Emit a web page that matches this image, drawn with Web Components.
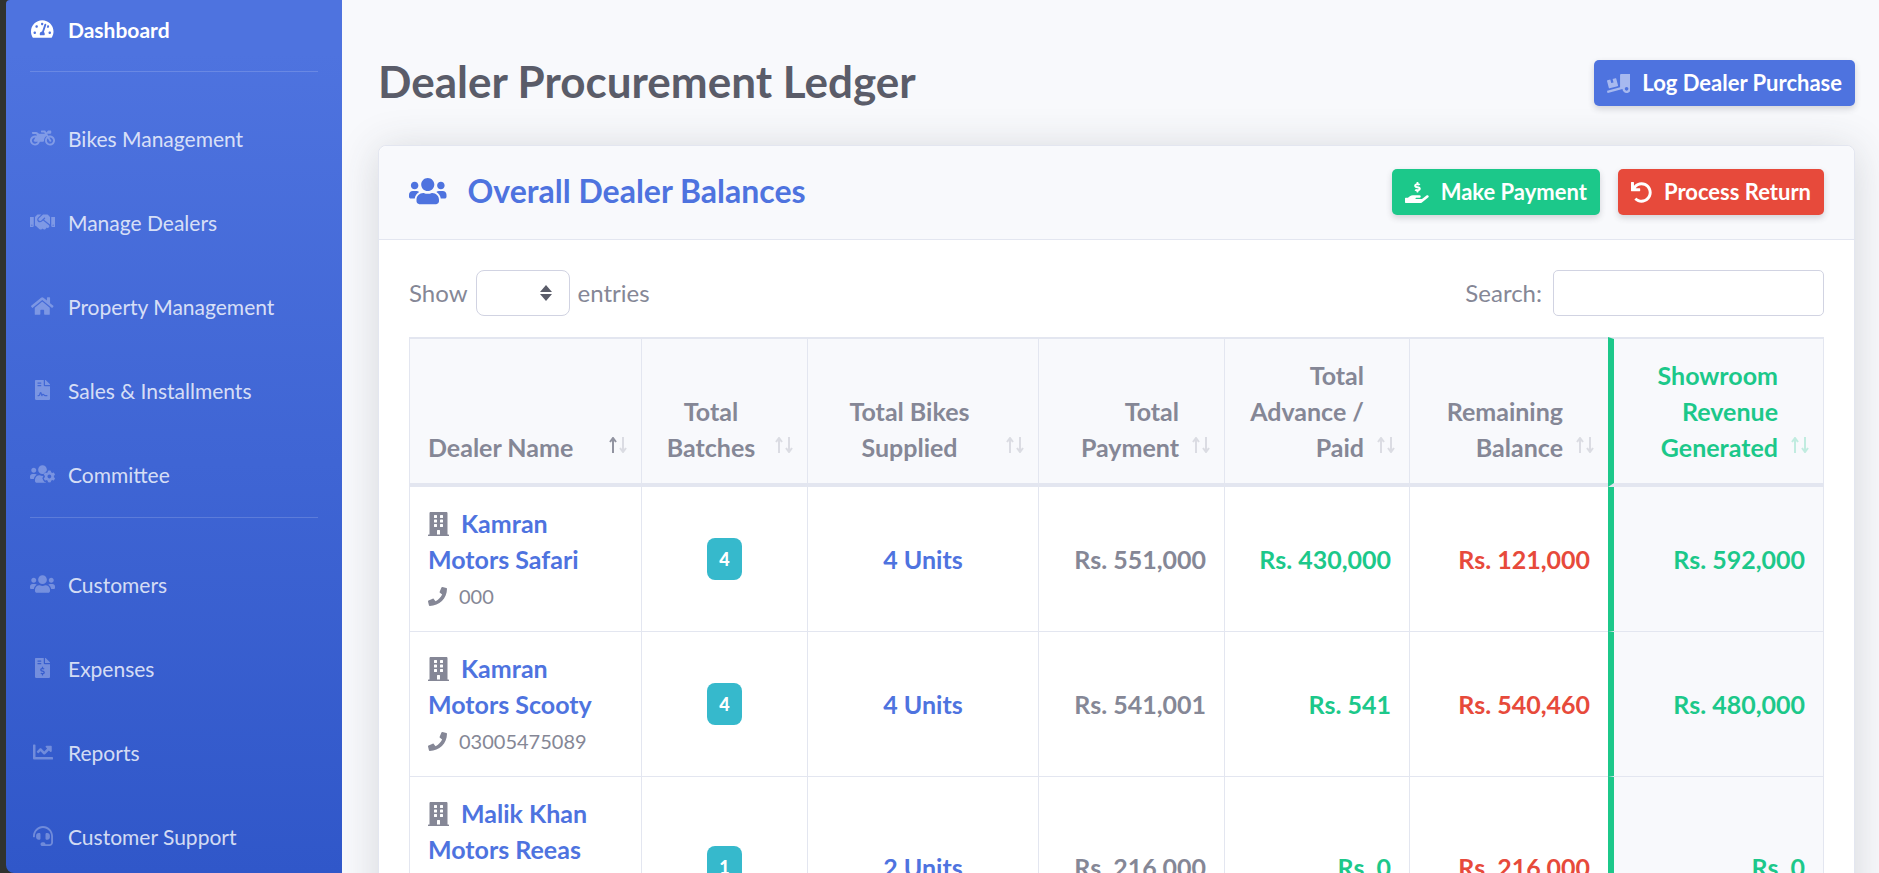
<!DOCTYPE html>
<html lang="en">
<head>
<meta charset="utf-8">
<title>Dealer Procurement Ledger</title>
<style>
  html, body { margin: 0; height: 100%; }
  body { font-family: Lato, "Open Sans", sans-serif; color: #858796; background: #f8f9fc; overflow: hidden; }
</style>
</head>
<body>
<app-shell>
  <side-nav slot="nav">
    <nav-group>
      <nav-item icon="gauge" active>Dashboard</nav-item>
    </nav-group>
    <nav-group>
      <nav-item icon="motorcycle">Bikes Management</nav-item>
      <nav-item icon="handshake">Manage Dealers</nav-item>
      <nav-item icon="home">Property Management</nav-item>
      <nav-item icon="contract">Sales &amp; Installments</nav-item>
      <nav-item icon="usersCog">Committee</nav-item>
    </nav-group>
    <nav-group>
      <nav-item icon="users">Customers</nav-item>
      <nav-item icon="invoice">Expenses</nav-item>
      <nav-item icon="chart">Reports</nav-item>
      <nav-item icon="headset">Customer Support</nav-item>
    </nav-group>
  </side-nav>
  <page-heading>
    Dealer Procurement Ledger
    <action-button slot="action" tone="primary" icon="truck">Log Dealer Purchase</action-button>
  </page-heading>
  <panel-card icon="users">
    <span slot="title">Overall Dealer Balances</span>
    <action-button slot="actions" tone="success" icon="payment">Make Payment</action-button>
    <action-button slot="actions" tone="danger" icon="undo">Process Return</action-button>
    <table-tools></table-tools>
    <dealer-table></dealer-table>
  </panel-card>
</app-shell>

<script>
const PAGE = 'M377 105L279.1 7c-4.5-4.5-10.6-7-17-7H256v128h128v-6.1c0-6.3-2.5-12.4-7-16.9zm-153 31V0H24C10.7 0 0 10.7 0 24v464c0 13.3 10.7 24 24 24h336c13.3 0 24-10.7 24-24V160H248c-13.2 0-24-10.8-24-24zM64 72c0-4.42 3.58-8 8-8h80c4.42 0 8 3.58 8 8v16c0 4.42-3.58 8-8 8H72c-4.42 0-8-3.58-8-8V72zm0 80v-16c0-4.42 3.58-8 8-8h80c4.42 0 8 3.58 8 8v16c0 4.42-3.58 8-8 8H72c-4.42 0-8-3.58-8-8z';
const win = (x, y) => `M${x} ${y + 12}c0-6.6 5.4-12 12-12h40c6.6 0 12 5.4 12 12v40c0 6.6-5.4 12-12 12h-40c-6.6 0-12-5.4-12-12z`;
/* name: [viewBox width, path]; every icon is 512 units high */
const ICONS = {
  gauge: [576, 'M288 32C128.94 32 0 160.94 0 320c0 52.8 14.25 102.26 39.06 144.8 5.61 9.62 16.3 15.2 27.44 15.2h443c11.14 0 21.83-5.58 27.44-15.2C561.75 422.26 576 372.8 576 320c0-159.06-128.94-288-288-288zm0 64c14.71 0 26.58 10.13 30.32 23.65-1.11 2.26-2.64 4.23-3.45 6.67l-9.22 27.67c-5.13 3.49-10.97 6.01-17.64 6.01-17.67 0-32-14.33-32-32S270.33 96 288 96zM96 384c-17.67 0-32-14.33-32-32s14.33-32 32-32 32 14.33 32 32-14.33 32-32 32zm48-160c-17.67 0-32-14.33-32-32s14.33-32 32-32 32 14.33 32 32-14.33 32-32 32zm246.77-72.41l-61.33 184C343.13 347.33 352 364.54 352 384c0 11.72-3.38 22.55-8.88 32H232.88c-5.5-9.45-8.88-20.28-8.88-32 0-33.94 26.5-61.43 59.9-63.59l61.34-184.01c4.17-12.56 17.73-19.45 30.36-15.17 12.57 4.19 19.35 17.79 15.17 30.36zm14.66 57.2l15.52-46.55c3.47-1.29 7.13-2.23 11.05-2.23 17.67 0 32 14.33 32 32s-14.33 32-32 32c-11.38-.01-20.89-6.28-26.57-15.22zM480 384c-17.67 0-32-14.33-32-32s14.33-32 32-32 32 14.33 32 32-14.33 32-32 32z'],
  motorcycle: [640, 'M512.9 192c-14.9-.1-29.1 2.3-42.4 6.9L437.6 144H520c13.3 0 24-10.7 24-24V88c0-13.3-10.7-24-24-24h-45.3c-6.8 0-13.3 2.9-17.8 7.9l-37.5 41.7-22.8-38C392.2 68.4 384.4 64 376 64h-80c-8.8 0-16 7.2-16 16v16c0 8.8 7.2 16 16 16h66.4l19.2 32H227.9c-17.7-23.1-44.9-40-99.9-40H72.5C59 104 47.7 115 48 128.5c.2 13 10.9 23.5 24 23.5h56c24.5 0 38.7 10.9 47.8 24.8l-11.3 20.5c-13-3.9-26.9-5.7-41.3-5.2C55.9 194.5 1.6 249.6 0 317c-1.6 72.1 56.3 131 128 131 59.6 0 109.7-40.8 124-96h84.2c13.7 0 24.6-11.4 24-25.1-2.1-47.1 17.5-93.7 56.2-125l12.5 20.8c-27.6 23.7-45.1 58.9-44.8 98.2.5 69.6 57.2 126.5 126.8 127.1 71.6.7 129.8-57.5 129.2-129.1-.7-69.6-57.6-126.4-127.2-126.9zM128 400c-44.1 0-80-35.9-80-80s35.9-80 80-80c4.2 0 8.4.3 12.5 1L99 316.4c-8.8 16 2.8 35.6 21 35.6h81.3c-12.4 28.2-40.6 48-73.3 48zm463.9-75.6c-2.2 40.6-35 73.4-75.5 75.5-46.1 2.5-84.4-34.3-84.4-79.9 0-21.4 8.4-40.8 22.1-55.1l49.4 82.4c4.5 7.6 14.4 10 22 5.5l13.7-8.2c7.6-4.5 10-14.4 5.5-22l-48.6-80.9c5.2-1.1 10.5-1.6 15.9-1.6 45.6-.1 82.3 38.2 79.9 84.3z'],
  handshake: [640, 'M434.7 64h-85.9c-8 0-15.7 3-21.6 8.4l-98.3 90c-.1.1-.2.3-.3.4-16.6 15.6-16.3 40.5-2.1 56 12.7 13.9 39.4 17.6 56.1 2.7.1-.1.3-.1.4-.2l79.9-73.2c6.5-5.9 16.7-5.5 22.6 1 6 6.5 5.5 16.6-1 22.6l-26.1 23.9L504 313.8c2.9 2.4 5.5 5 7.9 7.7V128l-54.6-54.6c-5.9-6-14.1-9.4-22.6-9.4zM544 128.2v223.9c0 17.7 14.3 32 32 32h64V128.2h-96zm48 223.9c-8.8 0-16-7.2-16-16s7.2-16 16-16 16 7.2 16 16-7.2 16-16 16zM0 384h64c17.7 0 32-14.3 32-32V128.2H0V384zm48-63.9c8.8 0 16 7.2 16 16s-7.2 16-16 16-16-7.2-16-16c0-8.9 7.2-16 16-16zm435.9 18.6L334.6 217.5l-30 27.5c-29.7 27.1-75.2 24.5-101.7-4.4-26.9-29.4-24.8-74.9 4.4-101.7L289.1 64h-83.8c-8.5 0-16.6 3.4-22.6 9.4L128 128v223.9h18.3l90.5 81.9c27.4 22.3 67.7 18.1 90-9.3l.2-.2 17.9 15.5c15.9 13 39.4 10.5 52.3-5.4l31.4-38.6 5.4 4.4c13.7 11.1 33.9 9.1 45-4.7l9.5-11.7c11.2-13.8 9.1-33.9-4.6-45.1z'],
  home: [576, 'M280.37 148.26L96 300.11V464a16 16 0 0 0 16 16l112.06-.29a16 16 0 0 0 15.92-16V368a16 16 0 0 1 16-16h64a16 16 0 0 1 16 16v95.64a16 16 0 0 0 16 16.05L464 480a16 16 0 0 0 16-16V300L295.67 148.26a12.19 12.19 0 0 0-15.3 0zM571.6 251.47L488 182.56V44.05a12 12 0 0 0-12-12h-56a12 12 0 0 0-12 12v72.61L318.47 43a48 48 0 0 0-61 0L4.34 251.47a12 12 0 0 0-1.6 16.9l25.5 31A12 12 0 0 0 45.15 301l235.22-193.74a12.19 12.19 0 0 1 15.3 0L530.9 301a12 12 0 0 0 16.9-1.6l25.5-31a12 12 0 0 0-1.7-16.93z'],
  contract: [384, PAGE + 'M256.81 384H304c8.84 0 16 7.16 16 16s-7.16 16-16 16h-47.19c-16.45 0-31.27-9.14-38.64-23.86-2.95-5.92-8.09-6.52-10.17-6.52s-7.22.59-10.02 6.19l-7.67 15.34a15.986 15.986 0 0 1-14.31 8.84c-.38 0-.75-.02-1.14-.05-6.45-.45-12-4.75-14.03-10.89L144 354.59l-10.61 31.88c-5.89 17.66-22.38 29.53-41 29.53H80c-8.84 0-16-7.16-16-16s7.16-16 16-16h12.39c4.83 0 9.11-3.08 10.64-7.66l18.19-54.64c3.3-9.81 12.44-16.41 22.78-16.41s19.48 6.59 22.77 16.41l13.88 41.64c19.77-16.19 54.05-9.7 66 14.16 2.02 4.06 5.96 6.5 10.16 6.5z'],
  invoice: [384, PAGE + 'M208 415.88V440c0 4.42-3.58 8-8 8h-16c-4.42 0-8-3.58-8-8v-24.29c-11.29-.58-22.27-4.52-31.37-11.35-3.9-2.93-4.1-8.77-.57-12.14l11.75-11.21c2.77-2.64 6.89-2.76 10.13-.73 3.87 2.42 8.26 3.72 12.82 3.72h28.11c6.5 0 11.8-5.92 11.8-13.19 0-5.95-3.61-11.19-8.77-12.73l-45-13.5c-18.59-5.58-31.58-23.42-31.58-43.39 0-24.52 19.05-44.44 42.67-45.07V232c0-4.42 3.58-8 8-8h16c4.42 0 8 3.58 8 8v24.29c11.29.58 22.27 4.51 31.37 11.35 3.9 2.93 4.1 8.77.57 12.14l-11.75 11.21c-2.77 2.64-6.89 2.76-10.13.73-3.87-2.43-8.26-3.72-12.82-3.72h-28.11c-6.5 0-11.8 5.92-11.8 13.19 0 5.95 3.61 11.19 8.77 12.73l45 13.5c18.59 5.58 31.58 23.42 31.58 43.39 0 24.53-19.05 44.44-42.67 45.07z'],
  users: [640, 'M96 224c35.3 0 64-28.7 64-64s-28.7-64-64-64-64 28.7-64 64 28.7 64 64 64zm448 0c35.3 0 64-28.7 64-64s-28.7-64-64-64-64 28.7-64 64 28.7 64 64 64zm32 32h-64c-17.6 0-33.5 7.1-45.1 18.6 40.3 22.1 68.9 62 75.1 109.4h66c17.7 0 32-14.3 32-32v-32c0-35.3-28.7-64-64-64zm-256 0c61.9 0 112-50.1 112-112S381.9 32 320 32 208 82.1 208 144s50.1 112 112 112zm76.8 32h-8.3c-20.8 10-43.9 16-68.5 16s-47.6-6-68.5-16h-8.3C179.6 288 128 339.6 128 403.2V432c0 26.5 21.5 48 48 48h288c26.5 0 48-21.5 48-48v-28.8c0-63.6-51.6-115.2-115.2-115.2zm-223.7-13.4C161.5 263.1 145.6 256 128 256H64c-35.3 0-64 28.7-64 64v32c0 17.7 14.3 32 32 32h65.9c6.3-47.4 34.9-87.3 75.2-109.4z'],
  usersCog: [640, 'M610.5 341.3c2.6-14.1 2.6-28.5 0-42.6l25.8-14.9c3-1.7 4.3-5.2 3.3-8.5-6.7-21.6-18.2-41.2-33.2-57.4-2.3-2.5-6-3.1-9-1.4l-25.8 14.9c-10.9-9.3-23.4-16.5-36.9-21.3v-29.8c0-3.4-2.4-6.4-5.7-7.1-22.3-5-45-4.8-66.2 0-3.3.7-5.7 3.7-5.7 7.1v29.8c-13.5 4.8-26 12-36.9 21.3l-25.8-14.9c-2.9-1.7-6.7-1.1-9 1.4-15 16.2-26.5 35.8-33.2 57.4-1 3.3.4 6.8 3.3 8.5l25.8 14.9c-2.6 14.1-2.6 28.5 0 42.6l-25.8 14.9c-3 1.7-4.3 5.2-3.3 8.5 6.7 21.6 18.2 41.1 33.2 57.4 2.3 2.5 6 3.1 9 1.4l25.8-14.9c10.9 9.3 23.4 16.5 36.9 21.3v29.8c0 3.4 2.4 6.4 5.7 7.1 22.3 5 45 4.8 66.2 0 3.3-.7 5.7-3.7 5.7-7.1v-29.8c13.5-4.8 26-12 36.9-21.3l25.8 14.9c2.9 1.7 6.7 1.1 9-1.4 15-16.2 26.5-35.8 33.2-57.4 1-3.3-.4-6.8-3.3-8.5zM496 368.5c-26.8 0-48.5-21.8-48.5-48.5s21.8-48.5 48.5-48.5 48.5 21.8 48.5 48.5-21.7 48.5-48.5 48.5zM96 224c35.3 0 64-28.7 64-64s-28.7-64-64-64-64 28.7-64 64 28.7 64 64 64zM320 256c12 0 24-2 35-6 14-24 32-47 58-57 12-15 19-31 19-49 0-61.9-50.1-112-112-112S208 82.1 208 144s50.1 112 112 112zM243.2 288h8.3c20.9 10 44 16 68.5 16 6 0 12 0 17-1v28c-17 12-22 27-17 43 8 30 24 56 46 78 12 12 28 16 42 14v14H176c-26.5 0-48-21.5-48-48v-28.8C128 339.6 179.6 288 243.2 288zM173.1 274.6C161.5 263.1 145.6 256 128 256H64c-35.3 0-64 28.7-64 64v32c0 17.7 14.3 32 32 32h65.9c6.3-47.4 34.9-87.3 75.2-109.4z'],
  chart: [512, 'M496 384H64V80c0-8.84-7.16-16-16-16H16C7.16 64 0 71.16 0 80v336c0 17.67 14.33 32 32 32h464c8.84 0 16-7.16 16-16v-32c0-8.84-7.16-16-16-16zM464 96H345.94c-21.38 0-32.09 25.85-16.97 40.97l32.4 32.4L288 242.75l-73.37-73.37c-12.5-12.5-32.76-12.5-45.25 0l-68.69 68.69c-6.25 6.25-6.25 16.38 0 22.63l22.62 22.62c6.25 6.25 16.38 6.25 22.63 0L192 237.25l73.37 73.37c12.5 12.5 32.76 12.5 45.25 0l96-96 32.4 32.4c15.12 15.12 40.97 4.41 40.97-16.97V112c.01-8.84-7.15-16-15.99-16z'],
  headset: [512, 'M192 208c0-17.67-14.33-32-32-32h-16c-35.35 0-64 28.65-64 64v48c0 35.35 28.65 64 64 64h16c17.67 0 32-14.33 32-32V208zm176 144c35.35 0 64-28.65 64-64v-48c0-35.35-28.65-64-64-64h-16c-17.67 0-32 14.33-32 32v112c0 17.67 14.33 32 32 32h16zM256 0C113.18 0 4.58 118.83 0 256v16c0 8.84 7.16 16 16 16h16c8.84 0 16-7.16 16-16v-16c0-114.69 93.31-208 208-208s208 93.31 208 208h-.12c.08 2.43.12 165.72.12 165.72 0 23.35-18.93 42.28-42.28 42.28H320c0-26.51-21.49-48-48-48h-32c-26.51 0-48 21.49-48 48s21.49 48 48 48h181.72c49.86 0 90.28-40.42 90.28-90.28V256C507.4 118.83 398.82 0 256 0z'],
  building: [448, 'M436 480h-20V24c0-13.255-10.745-24-24-24H56C42.745 0 32 10.745 32 24v456H12c-6.627 0-12 5.373-12 12v20h448v-20c0-6.627-5.373-12-12-12z' + win(128, 64) + win(256, 64) + win(128, 160) + win(256, 160) + win(128, 256) + win(256, 256) + 'M192 396c0-6.6 5.4-12 12-12h40c6.6 0 12 5.4 12 12v84h-64z'],
  phone: [512, 'M493.4 24.6l-104-24c-11.3-2.6-22.9 3.3-27.5 13.9l-48 112c-4.2 9.8-1.4 21.3 6.9 28l60.6 49.6c-36 76.7-98.9 140.5-177.2 177.2l-49.6-60.6c-6.8-8.3-18.2-11.1-28-6.9l-112 48C3.9 366.5-2 378.1.6 389.4l24 104C27.1 504.2 36.7 512 48 512c256.1 0 464-207.5 464-464 0-11.2-7.7-20.9-18.6-23.4z'],
  undo: [512, 'M212.333 224.333H12c-6.627 0-12-5.373-12-12V12C0 5.373 5.373 0 12 0h48c6.627 0 12 5.373 12 12v78.112C117.773 39.279 184.26 7.47 258.175 8.007c136.906.994 246.448 111.623 246.157 248.532C504.041 393.258 393.12 504 256.333 504c-64.089 0-122.496-24.313-166.51-64.215-5.099-4.622-5.334-12.554-.467-17.42l33.967-33.967c4.474-4.474 11.662-4.717 16.401-.525C170.76 415.336 211.58 432 256.333 432c97.268 0 176-78.716 176-176 0-97.267-78.716-176-176-176-58.496 0-110.28 28.476-142.274 72.333h98.274c6.627 0 12 5.373 12 12v48c0 6.627-5.373 12-12 12z'],
  payment: [576, 'M271.06,144.3l54.27,14.3a8.59,8.59,0,0,1,6.63,8.1c0,4.6-4.09,8.4-9.12,8.4h-35.6a30,30,0,0,1-11.19-2.2c-5.24-2.2-11.28-1.7-15.3,2l-19,17.5a11.68,11.68,0,0,0-2.25,2.66,11.42,11.42,0,0,0,3.88,15.74,83.77,83.77,0,0,0,34.51,11.5V240c0,8.8,7.83,16,17.37,16h17.37c9.55,0,17.38-7.2,17.38-16V222.4c32.93-3.6,57.84-31,53.5-63-3.15-23-22.46-41.3-46.56-47.7L282.68,97.4a8.59,8.59,0,0,1-6.63-8.1c0-4.6,4.09-8.4,9.12-8.4h35.6A30,30,0,0,1,332,83.1c5.23,2.2,11.28,1.7,15.3-2l19-17.5A11.31,11.31,0,0,0,368.47,61a11.43,11.43,0,0,0-3.84-15.78,83.82,83.82,0,0,0-34.52-11.5V16c0-8.8-7.82-16-17.37-16H295.37C285.82,0,278,7.2,278,16V33.6c-32.89,3.6-57.85,31-53.51,63C227.63,119.6,247,137.9,271.06,144.3ZM565.27,328.1c-11.8-10.7-30.2-10-42.6,0L430.27,402a63.64,63.64,0,0,1-40,14H272a16,16,0,0,1,0-32h78.29c15.9,0,30.71-10.9,33.25-26.6a31.2,31.2,0,0,0,.46-5.46A32,32,0,0,0,352,320H192a117.66,117.66,0,0,0-74.1,26.29L71.4,384H16A16,16,0,0,0,0,400v96a16,16,0,0,0,16,16H372.77a64,64,0,0,0,40-14L564,377a32,32,0,0,0,1.28-48.9Z'],
  truck: [640, 'M50.2 375.6c2.3 8.5 11.1 13.6 19.6 11.3l216.4-58c8.5-2.3 13.6-11.1 11.3-19.6l-49.7-185.5c-2.3-8.5-11.1-13.6-19.6-11.3L151 133.3l24.8 92.7-61.8 16.5-24.8-92.7-77.3 20.7C3.4 172.8-1.7 181.6.6 190.1l49.6 185.5zM384 0c-17.7 0-32 14.3-32 32v323.6L5.9 450c-4.3 1.2-6.8 5.6-5.6 9.8l12.6 46.3c1.2 4.3 5.6 6.8 9.8 5.6l393.7-107.4C418.8 464.1 467.6 512 528 512c61.9 0 112-50.1 112-112V0H384zm144 448c-26.5 0-48-21.5-48-48s21.5-48 48-48 48 21.5 48 48-21.5 48-48 48z']
};

/* Base class: clones a per-class template into an open shadow root. */
class Base extends HTMLElement {
  constructor() {
    super();
    const t = document.createElement('template');
    t.innerHTML = this.view();
    this.attachShadow({ mode: 'open' }).append(t.content.cloneNode(true));
  }
}

customElements.define('ui-icon', class extends Base {
  view() {
    const [w, d] = ICONS[this.getAttribute('name')];
    return `<style>
      :host { display: inline-block; height: var(--icon, 20px); }
      svg { display: block; height: 100%; width: auto; fill: currentColor; fill-rule: evenodd; }
    </style><svg viewBox="0 0 ${w} 512" aria-hidden="true"><path d="${d}"/></svg>`;
  }
});

customElements.define('app-shell', class extends Base {
  view() {
    return `<style>
      :host { display: flex; height: 100vh; overflow: hidden; background: #f8f9fc; }
      .rail { flex: none; width: 336px; padding-left: 6px; background: #30332f; }
      main { flex: 1; min-width: 0; padding: 0 24px 0 36px; overflow: hidden; }
      .topbar { height: 0; margin: 0 -24px 60px -36px; box-shadow: 0 0 42px rgba(58,59,69,.15); }
    </style>
    <div class="rail"><slot name="nav"></slot></div>
    <main><div class="topbar"></div><slot></slot></main>`;
  }
});

customElements.define('side-nav', class extends Base {
  view() {
    return `<style>
      :host { display: block; height: 100vh; overflow: hidden; border-radius: 4px 0 0 8px;
        background: linear-gradient(#4e73df 6%, #3057c9); }
      nav { padding: 0 24px; }
    </style><nav aria-label="Main"><slot></slot></nav>`;
  }
});

customElements.define('nav-group', class extends Base {
  view() {
    return `<style>
      :host { display: block; border-top: 1px solid rgba(255,255,255,.16); padding-top: 25px; }
      :host(:first-child) { border: 0; padding: 0 0 11px; }
    </style><slot></slot>`;
  }
});

customElements.define('nav-item', class extends Base {
  view() {
    return `<style>
      :host { display: block; height: 84px; }
      :host([active]) { height: 60px; }
      a { box-sizing: border-box; display: flex; align-items: center; gap: 13px; height: 100%; padding-bottom: 2px;
        font-size: 21px; color: rgba(255,255,255,.8); text-decoration: none; }
      i { display: flex; flex: none; justify-content: center; width: 25px; color: rgba(255,255,255,.3); }
      :host([active]) a { font-weight: 700; color: #fff; }
      :host([active]) i { color: #fff; }
    </style><a href="#"><i><ui-icon name="${this.getAttribute('icon')}"></ui-icon></i><span><slot></slot></span></a>`;
  }
});

customElements.define('page-heading', class extends Base {
  view() {
    return `<style>
      :host { display: flex; justify-content: space-between; margin-bottom: 39px; }
      h1 { margin: 0; font-size: 44px; line-height: 42px; font-weight: 700; color: #5a5c69; white-space: nowrap; }
    </style><h1><slot></slot></h1><slot name="action"></slot>`;
  }
});

customElements.define('action-button', class extends Base {
  view() {
    return `<style>
      :host { display: block; --bg: #4e73df; --icon: 21px; }
      :host([tone=success]) { --bg: #1cc88a; }
      :host([tone=danger]) { --bg: #e74a3b; }
      :host([tone=primary]) { --icon: 19px; }
      :host([tone=primary]) ui-icon { opacity: .5; }
      button { display: flex; align-items: center; gap: 12px; height: 46px; padding: 0 13px; border: 0; border-radius: 5px;
        background: var(--bg); color: #fff; font: 700 22px/46px Lato, sans-serif; white-space: nowrap;
        box-shadow: 0 3px 6px rgba(58,59,69,.2); }
    </style><button type="button"><ui-icon name="${this.getAttribute('icon')}"></ui-icon><span><slot></slot></span></button>`;
  }
});

customElements.define('panel-card', class extends Base {
  view() {
    return `<style>
      :host { display: block; min-height: 100vh; border: 1px solid #e3e6f0; border-radius: 8px; background: #fff;
        box-shadow: 0 4px 42px rgba(58,59,69,.18); }
      header { display: flex; align-items: flex-start; justify-content: space-between; padding: 23px 30px 24px;
        border-bottom: 1px solid #e3e6f0; border-radius: 8px 8px 0 0; background: #f8f9fc; }
      h2 { display: flex; align-items: center; gap: 21px; margin: 0; font-size: 32px; line-height: 44px; color: #4e73df; --icon: 30px; }
      .actions { display: flex; gap: 18px; }
      .body { padding: 30px 30px 0; }
    </style>
    <header><h2><ui-icon name="${this.getAttribute('icon')}"></ui-icon><slot name="title"></slot></h2>
    <div class="actions"><slot name="actions"></slot></div></header>
    <div class="body"><slot></slot></div>`;
  }
});

customElements.define('table-tools', class extends Base {
  view() {
    return `<style>
      :host { display: flex; justify-content: space-between; align-items: center; height: 46px; margin-bottom: 21px; font-size: 24px; }
      div { display: flex; align-items: center; gap: 8px; }
      label { padding-bottom: 2px; }
      .search { gap: 11px; }
      select, input { box-sizing: border-box; height: 46px; border: 1px solid #d1d3e2; background: #fff; color: #6e707e; font: 21px Lato, sans-serif; }
      select { appearance: none; width: 94px; padding: 0 36px 0 12px; border-radius: 8px; }
      .pick { display: grid; }
      .pick > * { grid-area: 1 / 1; }
      .pick svg { justify-self: end; align-self: center; width: 12px; height: 16px; margin-right: 18px; fill: #5a5c69; pointer-events: none; }
      input { width: 271px; padding: 0 12px; border-radius: 5px; }
    </style>
    <div><label for="len">Show</label>
      <span class="pick"><select id="len"><option selected></option><option>10</option><option>25</option></select>
      <svg viewBox="0 0 12 16" aria-hidden="true"><path d="M6 0l6 7H0zM0 9h12l-6 7z"/></svg></span>
      <label for="len">entries</label></div>
    <div class="search"><label for="q">Search:</label><input id="q" type="search"></div>`;
  }
});

const COLUMNS = [
  ['Dealer Name', 232, 'left'], ['Total Batches', 166, 'center'], ['Total Bikes Supplied', 231, 'center'],
  ['Total Payment', 186, 'right'], ['Total Advance / Paid', 185, 'right'], ['Remaining Balance', 199, 'right'],
  ['Showroom Revenue Generated', 216, 'right rev']
];
const DEALERS = [
  ['Kamran Motors Safari', '000', 4, '4 Units', '551,000', '430,000', '121,000', '592,000'],
  ['Kamran Motors Scooty', '03005475089', 4, '4 Units', '541,001', '541', '540,460', '480,000'],
  ['Malik Khan Motors Reeas', '', 1, '2 Units', '216,000', '0', '216,000', '0']
];

customElements.define('dealer-table', class extends Base {
  view() {
    const arrows = `<svg viewBox="0 0 20 16" aria-hidden="true"><path class="up" d="M5 16V2M2 5l3-4 3 4"/><path class="down" d="M15 0v14M12 11l3 4 3-4"/></svg>`;
    return `<style>
      :host { display: block; }
      table { width: 100%; table-layout: fixed; border-collapse: separate; border-spacing: 0; font-size: 25px; line-height: 36px; font-weight: 700; }
      th, td { box-sizing: border-box; padding: 18px; border: 0 solid #e3e6f0; border-left-width: 1px; text-align: center; }
      th { padding-right: 13px; border-top-width: 2px; border-bottom-width: 4px; background: #f8f9fc; vertical-align: bottom; }
      td { height: 145px; padding-top: 0; padding-bottom: 0; border-bottom-width: 1px; vertical-align: middle; }
      th:last-child, td:last-child { border-right-width: 1px; }
      .left { text-align: left; }
      .right { text-align: right; }
      th > div { display: flex; align-items: flex-end; gap: 12px; }
      th span { flex: 1; }
      th svg { flex: none; width: 20px; height: 16px; margin-bottom: 12px; fill: none; stroke: currentColor; stroke-width: 2; }
      th path { opacity: .25; }
      th.left .up { opacity: .9; }
      .rev { border-left: 6px solid #1cc88a; background: #f8f9fc; color: #1cc88a; }
      td.name { padding-top: 18px; vertical-align: top; }
      tr:last-child td { height: 181px; }
      .name ui-icon { --icon: 24px; margin-right: 12px; vertical-align: -3px; }
      .phone { display: flex; align-items: center; gap: 12px; line-height: 38px; font-size: 20px; font-weight: 400; }
      .phone ui-icon { --icon: 19px; margin: 0; }
      a, .blue { color: #4e73df; text-decoration: none; }
      .ok { color: #1cc88a; }
      .due { color: #e74a3b; }
      .badge { display: inline-block; min-width: 35px; border-radius: 8px; background: #36b9cc; color: #fff; font-size: 18px; font-weight: 900; line-height: 42px; vertical-align: middle; }
    </style>
    <table>
      <colgroup>${COLUMNS.map(c => `<col style="width:${c[1]}px">`).join('')}</colgroup>
      <thead><tr>${COLUMNS.map(c => `<th scope="col" class="${c[2]}"><div><span>${c[0]}</span>${arrows}</div></th>`).join('')}</tr></thead>
      <tbody>${DEALERS.map(d => `<tr>
        <td class="left name"><ui-icon name="building"></ui-icon><a href="#">${d[0]}</a>
          ${d[1] ? `<div class="phone"><ui-icon name="phone"></ui-icon><span>${d[1]}</span></div>` : ''}</td>
        <td><span class="badge">${d[2]}</span></td>
        <td class="blue">${d[3]}</td>
        <td class="right">Rs. ${d[4]}</td>
        <td class="right ok">Rs. ${d[5]}</td>
        <td class="right due">Rs. ${d[6]}</td>
        <td class="right rev">Rs. ${d[7]}</td></tr>`).join('')}</tbody>
    </table>`;
  }
});
</script>
</body>
</html>
